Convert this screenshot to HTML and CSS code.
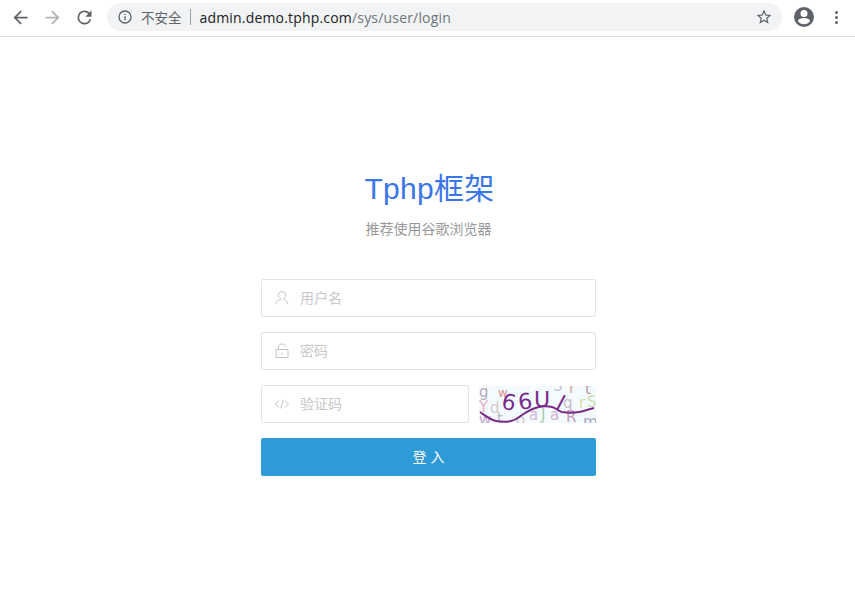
FILE: index.html
```html
<!DOCTYPE html>
<html lang="zh-CN">
<head>
    <meta charset="UTF-8">
    <title>Tphp框架</title>
    <link rel="stylesheet" href="styles.css">
</head>
<body>
    <div class="toolbar">
        <svg class="nav-icon" viewBox="0 0 24 24"><path d="M20 11H7.8l5.6-5.6L12 4l-8 8 8 8 1.4-1.4L7.8 13H20z" fill="#5f6368"/></svg>
        <svg class="nav-icon" viewBox="0 0 24 24"><path d="M4 11h12.2l-5.6-5.6L12 4l8 8-8 8-1.4-1.4 5.6-5.6H4z" fill="#b1b3b6"/></svg>
        <svg class="nav-icon" viewBox="0 0 24 24"><path d="M17.65 6.35A7.95 7.95 0 0 0 12 4a8 8 0 1 0 7.73 10h-2.08A6 6 0 1 1 12 6c1.66 0 3.14.69 4.22 1.78L13 11h7V4z" fill="#5f6368"/></svg>
        <div class="omnibox">
            <svg class="info-icon" viewBox="0 0 24 24"><path d="M11 7h2v2h-2zm0 4h2v6h-2zm1-9a10 10 0 1 0 0 20 10 10 0 0 0 0-20zm0 18a8 8 0 1 1 0-16 8 8 0 0 1 0 16z" fill="#5f6368"/></svg>
            <span class="secure">不安全</span>
            <span class="divider"></span>
            <span class="url">admin.demo.tphp.com<span class="url-path">/sys/user/login</span></span>
            <svg class="star-icon" viewBox="0 0 24 24"><path d="M22 9.24l-7.19-.62L12 2 9.19 8.63 2 9.24l5.46 4.73L5.82 21 12 17.27 18.18 21l-1.63-7.03L22 9.24zM12 15.4l-3.76 2.27 1-4.28-3.32-2.88 4.38-.38L12 6.1l1.71 4.04 4.38.38-3.32 2.88 1 4.28L12 15.4z" fill="#5f6368"/></svg>
        </div>
        <svg class="avatar-icon" viewBox="0 0 24 24"><path d="M12 2a10 10 0 1 0 0 20 10 10 0 0 0 0-20zm0 3a3.5 3.5 0 1 1 0 7 3.5 3.5 0 0 1 0-7zm0 14.2a7.2 7.2 0 0 1-6-3.22c.03-2 4-3.08 6-3.08s5.97 1.09 6 3.08a7.2 7.2 0 0 1-6 3.22z" fill="#5f6368"/></svg>
        <div class="menu-dots"><i></i><i></i><i></i></div>
    </div>

    <div class="page">
        <div class="login-box">
            <h1 class="title">Tphp框架</h1>
            <p class="subtitle">推荐使用谷歌浏览器</p>

            <div class="field">
                <svg class="field-icon" viewBox="0 0 16 16"><path d="M8 1.500a3.600 3.600 0 0 1 3.600 3.600c0 1.600-.9 3-2.200 3.500v.9c2 .4 3.800 1.300 4.200 3.400l.3 1.600M8 1.500a3.600 3.600 0 0 0-3.600 3.600c0 1.600.9 3 2.200 3.500v.9c-2 .4-3.800 1.300-4.200 3.400l-.3 1.600" fill="none" stroke="#c4c4c4"/></svg>
                <span class="placeholder">用户名</span>
            </div>
            <div class="field">
                <svg class="field-icon" viewBox="0 0 16 16"><path d="M2 6.500h12v8H2zM4.500 6.500V4C4.500 2.300 6 1 8 1s3.300 1 3.500 2.500M8 9.500v2.500" fill="none" stroke="#c4c4c4"/></svg>
                <span class="placeholder">密码</span>
            </div>
            <div class="captcha-row">
                <div class="field field-code">
                    <svg class="field-icon" viewBox="0 0 16 16"><path d="M5 4.500L1.500 8 5 11.500M11 4.500L14.500 8 11 11.500M9.300 3.500L6.700 12.500" fill="none" stroke="#c4c4c4"/></svg>
                    <span class="placeholder">验证码</span>
                </div>
                <svg class="captcha" viewBox="0 0 117 37" font-family="'DejaVu Sans', sans-serif">
                    <rect width="117" height="37" fill="#f3fbfe"/>
                    <g font-size="15">
                        <text x="0" y="11" fill="#b7a9b8">g</text>
                        <text x="19" y="11" fill="#e0918c" font-size="12">w</text>
                        <text x="0" y="26" fill="#e6b0c4">Y</text>
                        <text x="11" y="27" fill="#d9c8c8">d</text>
                        <text x="18" y="38" fill="#b9b9c4">t</text>
                        <text x="0" y="39" fill="#c7a9c9">w</text>
                        <text x="74" y="5" fill="#c9c3d1">S</text>
                        <text x="90" y="7" fill="#e0a49c">r</text>
                        <text x="106" y="8" fill="#b59a9a">t</text>
                        <text x="84" y="22" fill="#c9b9c9">q</text>
                        <text x="100" y="22" fill="#d6dfa8">r</text>
                        <text x="108" y="21" fill="#cfe0b0">S</text>
                        <text x="50" y="34" fill="#d4b6d8">a</text>
                        <text x="62" y="34" fill="#a9cfae">J</text>
                        <text x="71" y="34" fill="#d6b0d0">a</text>
                        <text x="87" y="36" fill="#c49ab8">R</text>
                        <text x="37" y="39" fill="#d0c4c8">o</text>
                        <text x="104" y="41" fill="#a9a9c8">m</text>
                    </g>
                    <g font-size="22" fill="#7a2a8a">
                        <text x="23" y="24" transform="rotate(12 30 16)">6</text>
                        <text x="39" y="23" transform="rotate(-8 46 15)">6</text>
                        <text x="55" y="21">U</text>
                        <text x="79" y="25" transform="rotate(28 82 16)">l</text>
                    </g>
                    <path d="M1 26C7 30 11 34 17 35c6 1 11 1 15 0 5-1 8-4 11-6 6-4 11-7 17-8 5-1 9-1 13 0 4 1 6 4 10 5 6 1 11 1 17 0 6-1 10-3 15-4" fill="none" stroke="#7a2a8a" stroke-width="2"/>
                </svg>
            </div>
            <button class="login-btn">登 入</button>
        </div>
    </div>
</body>
</html>
```

FILE: styles.css
```css
* {
    box-sizing: border-box;
}
body {
    margin: 0;
    background: #fff;
    font-family: "Liberation Sans", "Noto Sans CJK SC", sans-serif;
}
.toolbar {
    display: flex;
    align-items: center;
    height: 37px;
    padding: 2px 0 4px 10px;
    border-bottom: 1px solid #dcdcdc;
}
.nav-icon {
    width: 21px;
    height: 21px;
    margin-right: 11px;
    flex: none;
}
.omnibox {
    display: flex;
    align-items: center;
    width: 675px;
    height: 28px;
    margin-left: 1px;
    padding: 0 9px 0 10px;
    border-radius: 14px;
    background: #f1f3f4;
    font-family: "Open Sans", "Noto Sans CJK SC", sans-serif;
    font-size: 14px;
}
.info-icon {
    width: 16px;
    height: 16px;
}
.secure {
    margin-left: 8px;
    color: #5f6368;
    font-size: 13.500px;
}
.divider {
    width: 1px;
    height: 16px;
    margin: 0 9px 0 8px;
    background: #9aa0a6;
}
.url {
    color: #202124;
    letter-spacing: .18px;
}
.url-path {
    color: #70757a;
}
.star-icon {
    width: 18px;
    height: 18px;
    margin-left: auto;
}
.avatar-icon {
    width: 24px;
    height: 24px;
    margin-left: 10px;
    flex: none;
}
.menu-dots {
    display: flex;
    flex-direction: column;
    gap: 2px;
    margin-left: 19px;
}
.menu-dots i {
    width: 3px;
    height: 3px;
    border-radius: 50%;
    background: #5f6368;
}
.page {
    display: flex;
    justify-content: center;
    padding: 133px 0 0 2px;
}
.login-box {
    width: 335px;
}
.title {
    margin: 0;
    padding-left: 2px;
    color: #3b76e8;
    font-size: 30px;
    font-weight: normal;
    letter-spacing: .3px;
    line-height: 38px;
    text-align: center;
}
.subtitle {
    margin: 11px 0 40px;
    color: #999;
    font-size: 14px;
    line-height: 20px;
    text-align: center;
}
.field {
    display: flex;
    align-items: center;
    height: 38px;
    margin-bottom: 15px;
    padding-left: 12px;
    border: 1px solid #e4e4e4;
    border-radius: 2px;
}
.field-icon {
    width: 16px;
    height: 16px;
    flex: none;
}
.placeholder {
    margin: 0 0 2px 10px;
    color: #c8c8c8;
    font-size: 14px;
}
.captcha-row {
    display: flex;
    justify-content: space-between;
}
.field-code {
    width: 208px;
}
.captcha {
    width: 117px;
    height: 37px;
    margin-top: 1px;
}
.login-btn {
    display: block;
    width: 100%;
    height: 38px;
    padding: 0 0 2px;
    border: none;
    border-radius: 2px;
    background: #2f9ad8;
    color: #fff;
    font-family: inherit;
    font-size: 14px;
}
```
